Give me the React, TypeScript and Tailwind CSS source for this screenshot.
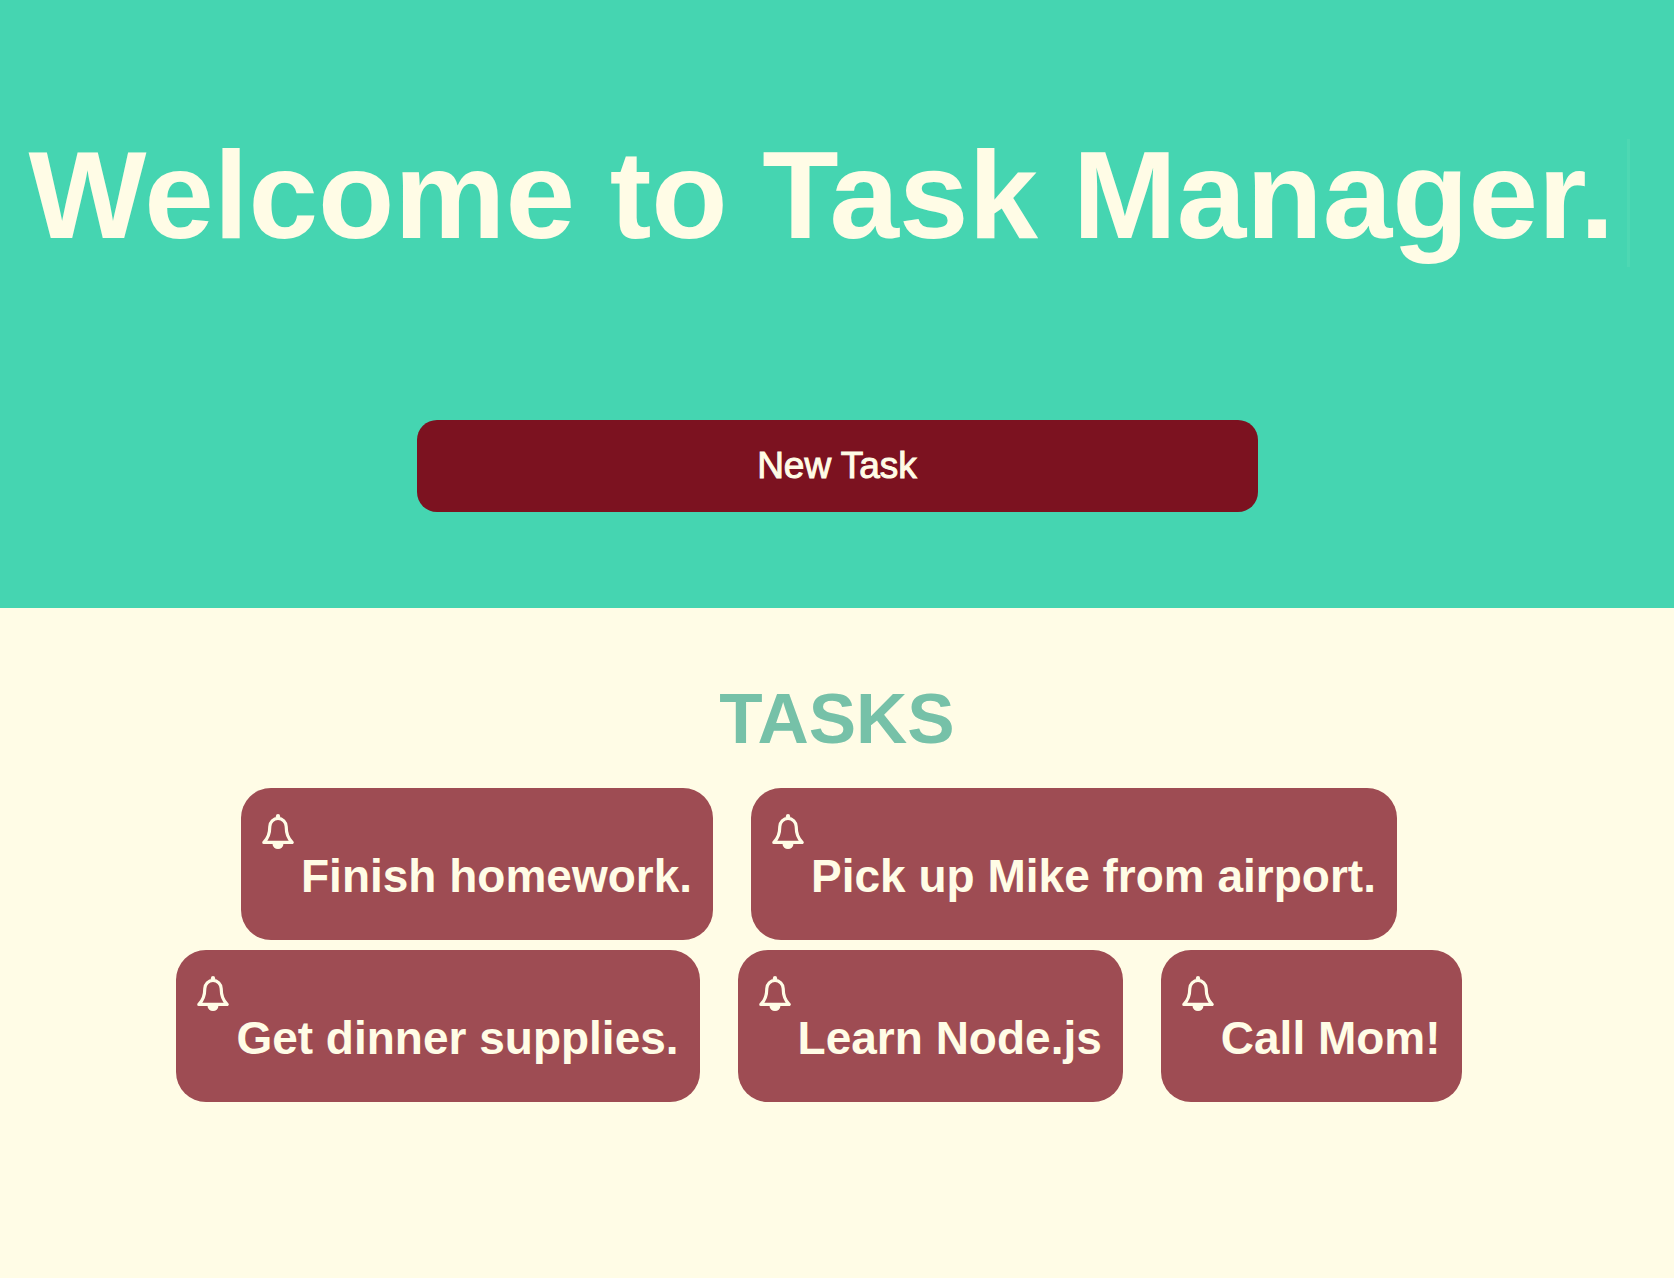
const taskRows: string[][] = [
  ["Finish homework.", "Pick up Mike from airport."],
  ["Get dinner supplies.", "Learn Node.js", "Call Mom!"],
];

function BellIcon() {
  return (
    <svg
      viewBox="0 0 36 36"
      className="size-9 shrink-0"
      fill="none"
      stroke="currentColor"
      strokeWidth="3.2"
      strokeLinecap="round"
      strokeLinejoin="round"
      aria-hidden="true"
    >
      <path d="M3.8 28.4C7.6 25 9.8 19 9.8 12.6a8.2 8.2 0 0 1 16.4 0c0 6.4 2.2 12.4 6 15.8Z" />
      <circle cx="18" cy="2.2" r="2.1" fill="currentColor" stroke="none" />
      <path
        d="M12.5 29.5h11a5.5 5.5 0 0 1-11 0Z"
        fill="currentColor"
        stroke="none"
      />
    </svg>
  );
}

function TaskCard({ title }: { title: string }) {
  return (
    <li className="flex items-start gap-[5px] rounded-[30px] bg-[#9e4c53] pt-[26px] pr-[21px] pb-9 pl-[19px] text-[#fffce6]">
      <BellIcon />
      <h3 className="mt-[34px] text-[46px] leading-[56px] font-bold whitespace-nowrap">
        {title}
      </h3>
    </li>
  );
}

export default function App() {
  return (
    <div className="min-h-screen overflow-x-hidden bg-[#fffce6] font-['Liberation_Sans',Arial,sans-serif]">
      <header className="flex flex-col items-center bg-[#45d5b1] pt-[123px] pb-24">
        <div className="flex items-end gap-3 pr-4">
          <h1 className="text-[125px] leading-[144px] font-bold whitespace-nowrap text-[#fffce6]">
            Welcome to Task Manager.
          </h1>
          <span className="h-32 w-[3px] bg-[#4ed8b3]" aria-hidden="true" />
        </div>
        <button
          type="button"
          className="mt-[153px] box-content h-[92px] w-1/2 rounded-[20px] bg-[#7c1220] px-0.5 text-[37px] text-[#fffce6] [-webkit-text-stroke:1px_#fffce6]"
        >
          New Task
        </button>
      </header>
      <main className="pt-[71px] pb-16">
        <h2 className="text-center text-[71px] leading-[80px] font-bold text-[#76c1a8]">
          TASKS
        </h2>
        <div className="mt-[29px] flex flex-col gap-2.5 pr-9">
          {taskRows.map((row) => (
            <ul key={row[0]} className="flex justify-center gap-[38px]">
              {row.map((title) => (
                <TaskCard key={title} title={title} />
              ))}
            </ul>
          ))}
        </div>
      </main>
    </div>
  );
}
